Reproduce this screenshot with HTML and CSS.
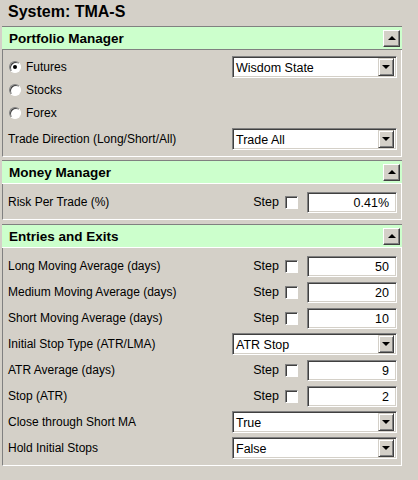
FILE: index.html
```html
<!DOCTYPE html>
<html>
<head>
<meta charset="utf-8">
<link rel="stylesheet" href="styles.css">
</head>
<body>
<div class="title">System: TMA-S</div>

<div class="panel p1">
  <div class="phead dark"><span>Portfolio Manager</span><span class="hbtn"><i class="up"></i></span></div>
  <div class="pbody">
    <div class="row r23">
      <label class="radio"><span class="rdot on"></span>Futures</label>
      <div class="select w165"><span class="val">Wisdom State</span><span class="sbtn"><i class="down"></i></span></div>
    </div>
    <div class="row r23"><label class="radio"><span class="rdot"></span>Stocks</label></div>
    <div class="row r23"><label class="radio"><span class="rdot"></span>Forex</label></div>
    <div class="row r22 mt3">
      <span class="lbl">Trade Direction (Long/Short/All)</span>
      <div class="select w165"><span class="val">Trade All</span><span class="sbtn"><i class="down"></i></span></div>
    </div>
  </div>
</div>

<div class="panel p2">
  <div class="phead"><span>Money Manager</span><span class="hbtn"><i class="up"></i></span></div>
  <div class="pbody">
    <div class="row r22">
      <span class="lbl">Risk Per Trade (%)</span>
      <div class="right"><span class="step">Step</span><span class="chk"></span><div class="input">0.41%</div></div>
    </div>
  </div>
</div>

<div class="panel p3">
  <div class="phead"><span>Entries and Exits</span><span class="hbtn"><i class="up"></i></span></div>
  <div class="pbody list">
    <div class="row r22">
      <span class="lbl">Long Moving Average (days)</span>
      <div class="right"><span class="step">Step</span><span class="chk"></span><div class="input">50</div></div>
    </div>
    <div class="row r22">
      <span class="lbl">Medium Moving Average (days)</span>
      <div class="right"><span class="step">Step</span><span class="chk"></span><div class="input">20</div></div>
    </div>
    <div class="row r22">
      <span class="lbl">Short Moving Average (days)</span>
      <div class="right"><span class="step">Step</span><span class="chk"></span><div class="input">10</div></div>
    </div>
    <div class="row r22">
      <span class="lbl">Initial Stop Type (ATR/LMA)</span>
      <div class="select w165"><span class="val">ATR Stop</span><span class="sbtn"><i class="down"></i></span></div>
    </div>
    <div class="row r22">
      <span class="lbl">ATR Average (days)</span>
      <div class="right"><span class="step">Step</span><span class="chk"></span><div class="input">9</div></div>
    </div>
    <div class="row r22">
      <span class="lbl">Stop (ATR)</span>
      <div class="right"><span class="step">Step</span><span class="chk"></span><div class="input">2</div></div>
    </div>
    <div class="row r22">
      <span class="lbl">Close through Short MA</span>
      <div class="select w165"><span class="val">True</span><span class="sbtn"><i class="down"></i></span></div>
    </div>
    <div class="row r22">
      <span class="lbl">Hold Initial Stops</span>
      <div class="select w165"><span class="val">False</span><span class="sbtn"><i class="down"></i></span></div>
    </div>
  </div>
</div>
</body>
</html>
```

FILE: styles.css
```css
html, body {
  margin: 0;
  padding: 0;
  background: #d4d0c8;
}
body {
  width: 418px;
  height: 480px;
  font-family: "Liberation Sans", Arial, sans-serif;
  font-size: 12px;
  color: #000;
  overflow: hidden;
}
.title {
  height: 26px;
  line-height: 24px;
  padding-left: 8px;
  font-size: 16px;
  font-weight: bold;
}
.panel {
  width: 400px;
  margin-left: 2px;
}
.p1 { margin-bottom: 3px; }
.p2 { margin-bottom: 4px; }
.phead {
  height: 22px;
  background: #ccffcc;
  border-top: 1px solid #808080;
  border-bottom: 1px solid #ffffff;
  display: flex;
  align-items: center;
  justify-content: space-between;
  padding-left: 7px;
  font-size: 13.5px;
  font-weight: bold;
}
.phead.dark { border-bottom-color: #808080; }
.hbtn {
  width: 13px;
  height: 13px;
  margin-right: 2px;
  background: #d4d0c8;
  border: 1px solid;
  border-color: #ffffff #404040 #404040 #ffffff;
  box-shadow: inset -1px -1px 0 #808080;
  padding: 1px;
  display: flex;
  align-items: center;
  justify-content: center;
}
.up {
  width: 0;
  height: 0;
  border-left: 4px solid transparent;
  border-right: 4px solid transparent;
  border-bottom: 4px solid #000;
}
.down {
  width: 0;
  height: 0;
  border-left: 4px solid transparent;
  border-right: 4px solid transparent;
  border-top: 4px solid #000;
}
.pbody {
  border-left: 1px solid #808080;
  border-right: 1px solid #ffffff;
  border-bottom: 1px solid #ffffff;
  padding: 6px 4px 6px 5px;
  display: flex;
  flex-direction: column;
}
.p2 .pbody, .p3 .pbody { padding-top: 7px; }
.list { gap: 4px; }
.row {
  display: flex;
  align-items: center;
  justify-content: space-between;
}
.r23 { height: 23px; align-items: flex-start; }
.r23 .radio { height: 22px; }
.r22 { height: 22px; }
.mt3 { margin-top: 3px; }
.radio {
  display: flex;
  align-items: center;
}
.rdot {
  box-sizing: border-box;
  width: 12px;
  height: 12px;
  margin-left: 1px;
  margin-right: 5px;
  border-radius: 50%;
  background: #fff;
  border: 1px solid;
  border-color: #808080 #ffffff #ffffff #808080;
  box-shadow: inset 1px 1px 0 #404040;
  display: flex;
  align-items: center;
  justify-content: center;
}
.rdot.on::after {
  content: "";
  width: 4px;
  height: 4px;
  border-radius: 50%;
  background: #000;
}
.select {
  box-sizing: border-box;
  height: 22px;
  background: #fff;
  border: 1px solid;
  border-color: #808080 #ffffff #ffffff #808080;
  box-shadow: inset 1px 1px 0 #404040, inset -1px -1px 0 #d4d0c8;
  display: flex;
  align-items: center;
  justify-content: space-between;
  padding: 2px;
  padding-left: 3px;
}
.w165 { width: 165px; }
.val {
  font-size: 12.5px;
  padding-top: 1px;
}
.sbtn {
  box-sizing: border-box;
  width: 16px;
  height: 18px;
  background: #d4d0c8;
  border: 1px solid;
  border-color: #d4d0c8 #404040 #404040 #d4d0c8;
  box-shadow: inset 1px 1px 0 #ffffff, inset -1px -1px 0 #808080;
  display: flex;
  align-items: center;
  justify-content: center;
}
.right {
  display: flex;
  align-items: center;
}
.step {
  margin-right: 6px;
  font-size: 12.5px;
}
.chk {
  box-sizing: border-box;
  width: 13px;
  height: 13px;
  background: #fff;
  border: 1px solid;
  border-color: #808080 #ffffff #ffffff #808080;
  box-shadow: inset 1px 1px 0 #404040;
  margin-right: 9px;
}
.input {
  box-sizing: border-box;
  width: 90px;
  height: 21px;
  background: #fff;
  border: 1px solid;
  border-color: #808080 #ffffff #ffffff #808080;
  box-shadow: inset 1px 1px 0 #404040, inset -1px -1px 0 #d4d0c8;
  text-align: right;
  padding-right: 7px;
  line-height: 20px;
  font-size: 12.5px;
}
.lbl { white-space: nowrap; }
```
